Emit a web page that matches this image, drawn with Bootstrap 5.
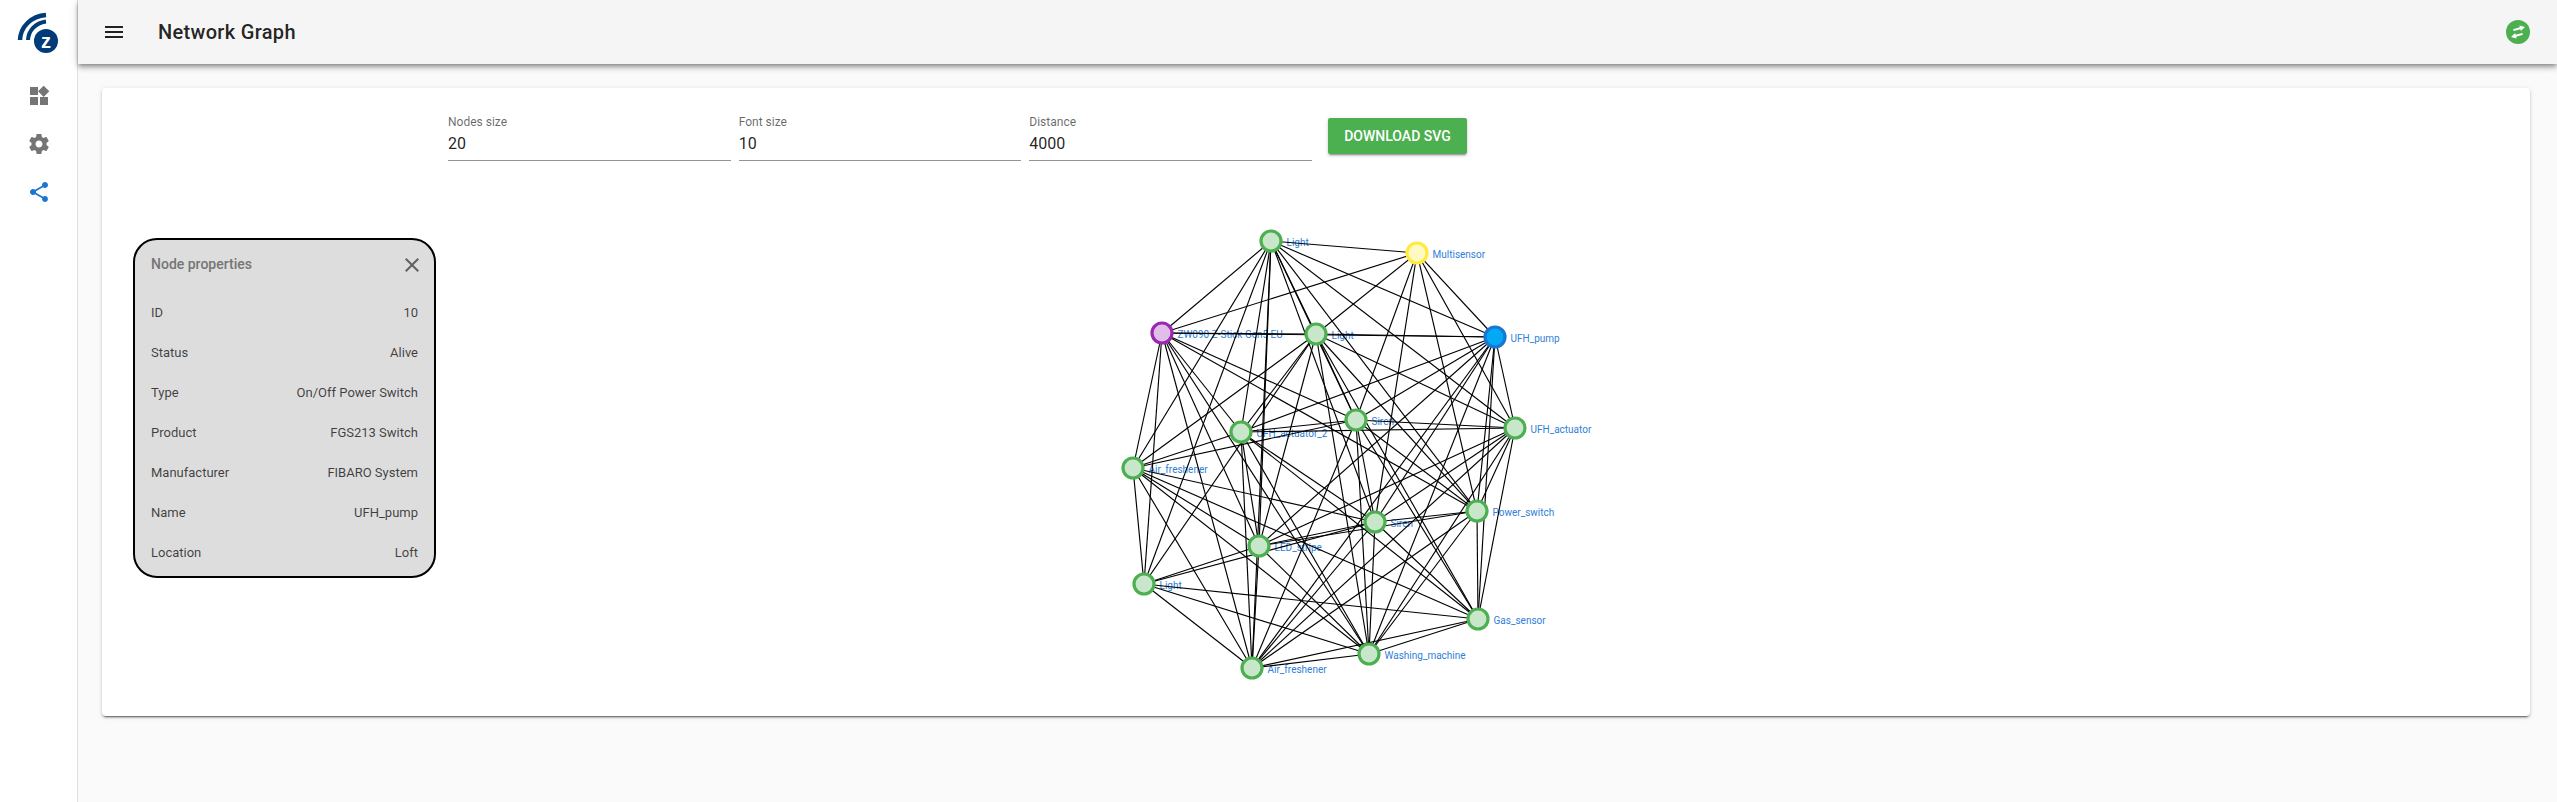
<!DOCTYPE html>
<html lang="en">
<head>
<meta charset="utf-8">
<title>Network Graph</title>
<link rel="stylesheet" href="https://cdn.jsdelivr.net/npm/bootstrap@5.3.0/dist/css/bootstrap.min.css">
<style>
html,body{height:100%}
body{font-family:Roboto,"Liberation Sans",sans-serif;background:#fafafa;color:#212121;overflow:hidden}
.rail{width:78px;flex:none;background:#fff;border-right:1px solid #e0e0e0}
.rail-logo{height:64px;width:77px}
.rail-icon{display:block;width:24px;height:24px;margin-bottom:24px;fill:#757575}
.rail-first{margin-top:20px}
.rail-active{fill:#1976d2}
.topbar{height:64px;flex:none;background:#f5f5f5;padding:0 27px 0 24px;box-shadow:0 2px 4px -1px rgba(0,0,0,.3),0 4px 5px rgba(0,0,0,.2),0 1px 10px rgba(0,0,0,.12);position:relative;z-index:2}
.topbar-menu{width:24px;height:24px;fill:#212121}
.topbar-title{font-size:20px;font-weight:500;letter-spacing:.32px;margin-left:32px;color:rgba(0,0,0,.87)}
.surface{margin:24px 27px 0 24px;height:628px;border-radius:4px;box-shadow:0 3px 1px -2px rgba(0,0,0,.4),0 2px 2px rgba(0,0,0,.2),0 1px 5px rgba(0,0,0,.12)}
.controls{padding:27px 0 0 346px;gap:8px}
.field{width:282.67px}
.field-label{font-size:12px;line-height:14px;color:rgba(0,0,0,.6);margin:0;display:block}
.field-input{border:0;border-bottom:1px solid #949494;border-radius:0;padding:3px 0 5px;height:32px;font-size:16px;line-height:24px;color:rgba(0,0,0,.87);background:none}
.dl-btn{background:#4caf50;border:0;height:36px;width:139px;margin:3px 0 0 8px;padding:0;font-size:14px;font-weight:500;letter-spacing:0;text-transform:uppercase;border-radius:2px;box-shadow:0 3px 1px -2px rgba(0,0,0,.2),0 2px 2px rgba(0,0,0,.14),0 1px 5px rgba(0,0,0,.12)}
.graph-area{flex:1;min-height:0}
.graph-svg{display:block;width:100%;height:100%}
.graph-svg text{font:10px Roboto,"Liberation Sans",sans-serif;fill:#2f80d8}
.graph-svg line{stroke:#000;stroke-width:1.15}
.graph-svg circle{stroke-width:3.2}
.node-green{fill:#c8e6c9;stroke:#4caf50}
.node-purple{fill:#e1bee7;stroke:#9c27b0}
.node-yellow{fill:#fff9c4;stroke:#ffeb3b}
.node-blue{fill:#03a9f4;stroke:#1976d2}
.props{position:absolute;left:31px;top:77px;width:303px;height:340px;background:#ddd;border:2px solid #000;border-radius:24px;padding:0 16px 0 16px}
.props-head{height:53px;font-size:14px;font-weight:500;color:#757575}
.props-close{width:24px;height:24px;fill:#616161;margin-right:-6px}
.props-row{height:40px;font-size:13px;color:rgba(0,0,0,.72)}
</style>
</head>
<body class="d-flex">
<nav class="rail d-flex flex-column align-items-center">
  <svg class="rail-logo" viewBox="0 0 77 64">
    <path d="M20 40C20.500 27 31 16 46 15" fill="none" stroke="#003b7a" stroke-width="4.500"/>
    <path d="M28 40C28.500 31 35 23 46 21.500" fill="none" stroke="#003b7a" stroke-width="4"/>
    <circle cx="46" cy="41" r="12" fill="#003b7a"/>
    <text x="46" y="48" text-anchor="middle" fill="#fff" font-family="Liberation Sans" font-weight="700" font-size="20">z</text>
  </svg>
  <svg class="rail-icon rail-first" viewBox="0 0 24 24"><path d="M13 13v8h8v-8h-8zM3 21h8v-8H3v8zM3 3v8h8V3H3zm13.660-1.310L11 7.340 16.660 13l5.660-5.660-5.660-5.650z"/></svg>
  <svg class="rail-icon" viewBox="0 0 24 24"><path d="M19.430 12.980c.04-.32.07-.64.07-.98s-.03-.66-.07-.98l2.110-1.650c.19-.15.24-.42.12-.64l-2-3.460c-.12-.22-.39-.3-.61-.22l-2.490 1c-.52-.4-1.080-.73-1.690-.98l-.38-2.650C14.460 2.180 14.250 2 14 2h-4c-.25 0-.46.18-.49.42l-.38 2.650c-.61.25-1.170.59-1.690.98l-2.490-1c-.23-.09-.49 0-.61.22l-2 3.460c-.13.22-.07.49.12.64l2.110 1.650c-.04.32-.07.65-.07.98s.03.66.07.98l-2.110 1.650c-.19.15-.24.42-.12.64l2 3.460c.12.22.39.3.61.22l2.490-1c.52.4 1.080.73 1.690.98l.38 2.650c.03.24.24.42.49.42h4c.25 0 .46-.18.49-.42l.38-2.650c.61-.25 1.170-.59 1.690-.98l2.490 1c.23.09.49 0 .61-.22l2-3.460c.12-.22.07-.49-.12-.64l-2.110-1.650zM12 15.500c-1.930 0-3.500-1.570-3.500-3.500s1.570-3.500 3.500-3.500 3.500 1.570 3.500 3.500-1.570 3.500-3.500 3.500z"/></svg>
  <svg class="rail-icon rail-active" viewBox="0 0 24 24"><path d="M18 16.080c-.76 0-1.440.3-1.960.77L8.910 12.700c.05-.23.09-.46.09-.7s-.04-.47-.09-.7l7.050-4.110c.54.5 1.250.81 2.040.81 1.660 0 3-1.340 3-3s-1.340-3-3-3-3 1.340-3 3c0 .24.04.47.09.7L8.040 9.810C7.500 9.310 6.790 9 6 9c-1.660 0-3 1.340-3 3s1.340 3 3 3c.79 0 1.500-.31 2.040-.81l7.120 4.160c-.05.21-.08.43-.08.65 0 1.610 1.310 2.920 2.920 2.920 1.610 0 2.920-1.310 2.920-2.920s-1.310-2.920-2.920-2.920z"/></svg>
</nav>
<div class="flex-grow-1 d-flex flex-column" style="min-width:0">
  <header class="topbar d-flex align-items-center">
    <svg class="topbar-menu" viewBox="0 0 24 24"><path d="M3 18h18v-2H3v2zm0-5h18v-2H3v2zm0-7v2h18V6H3z"/></svg>
    <div class="topbar-title">Network Graph</div>
    <svg class="ms-auto" width="24" height="24" viewBox="0 0 24 24"><circle cx="12" cy="12" r="12" fill="#4caf50"/><g transform="rotate(-15 12 12)" fill="#fff"><path d="M15 6.200L20 9 15 11.800V10H8V8H15z"/><path d="M9 12.200L4 15 9 17.800V16H16V14H9z"/></g></svg>
  </header>
  <main class="card border-0 surface d-flex flex-column">
    <div class="controls d-flex align-items-start">
      <div class="field"><label class="field-label" for="f1">Nodes size</label><input id="f1" class="form-control field-input shadow-none" value="20"></div>
      <div class="field"><label class="field-label" for="f2">Font size</label><input id="f2" class="form-control field-input shadow-none" value="10"></div>
      <div class="field"><label class="field-label" for="f3">Distance</label><input id="f3" class="form-control field-input shadow-none" value="4000"></div>
      <button class="btn btn-success dl-btn">Download SVG</button>
    </div>
    <div class="graph-area position-relative">
      <svg class="graph-svg" id="graph" viewBox="102 161 2428 555" preserveAspectRatio="xMinYMin"></svg>
      <div class="props">
        <div class="props-head d-flex align-items-center justify-content-between pb-1"><span>Node properties</span><svg class="props-close" viewBox="0 0 24 24"><path d="M19 6.410L17.590 5 12 10.590 6.410 5 5 6.410 10.590 12 5 17.590 6.410 19 12 13.410 17.590 19 19 17.590 13.410 12z"/></svg></div>
        <div class="props-row d-flex align-items-center justify-content-between"><span>ID</span><span>10</span></div>
        <div class="props-row d-flex align-items-center justify-content-between"><span>Status</span><span>Alive</span></div>
        <div class="props-row d-flex align-items-center justify-content-between"><span>Type</span><span>On/Off Power Switch</span></div>
        <div class="props-row d-flex align-items-center justify-content-between"><span>Product</span><span>FGS213 Switch</span></div>
        <div class="props-row d-flex align-items-center justify-content-between"><span>Manufacturer</span><span>FIBARO System</span></div>
        <div class="props-row d-flex align-items-center justify-content-between"><span>Name</span><span>UFH_pump</span></div>
        <div class="props-row d-flex align-items-center justify-content-between"><span>Location</span><span>Loft</span></div>
      </div>
    </div>
  </main>
</div>
<script>
var N=[[1271,241,"Light","green"],[1162,333,"ZW090 Z-Stick Gen5 EU","purple"],[1316,334,"Light","green"],[1241,432,"UFH_actuator_2","green"],[1356,420,"Siren","green"],[1417,253,"Multisensor","yellow"],[1495,337,"UFH_pump","blue"],[1515,428,"UFH_actuator","green"],[1133,468,"Air_freshener","green"],[1259,546,"LED_stripe","green"],[1375,522,"Siren","green"],[1144,584,"Light","green"],[1252,668,"Air_freshener","green"],[1369,654,"Washing_machine","green"],[1477,511,"Power_switch","green"],[1478,619,"Gas_sensor","green"]];
var skip=" 3-5 5-8 5-9 5-11 5-12 5-13 5-15 6-11 7-11 11-14 3-11 2-10 3-14 4-9 1-10 8-14 7-8 1-7 9-15 0-13 0-15 1-15 2-12 4-11 6-8 ";
var s="";
N.forEach(function(n){s+='<text x="'+(n[0]+15.500)+'" y="'+(n[1]+5)+'">'+n[2]+'</text>'});
for(var i=0;i<N.length;i++)for(var j=i+1;j<N.length;j++)if(skip.indexOf(" "+i+"-"+j+" ")<0)s+='<line x1="'+N[i][0]+'" y1="'+N[i][1]+'" x2="'+N[j][0]+'" y2="'+N[j][1]+'"/>';
N.forEach(function(n){s+='<circle class="node-'+n[3]+'" cx="'+n[0]+'" cy="'+n[1]+'" r="10"/>'});
document.getElementById("graph").innerHTML=s;
</script>
<script src="https://cdn.jsdelivr.net/npm/bootstrap@5.3.0/dist/js/bootstrap.bundle.min.js"></script>
</body>
</html>
